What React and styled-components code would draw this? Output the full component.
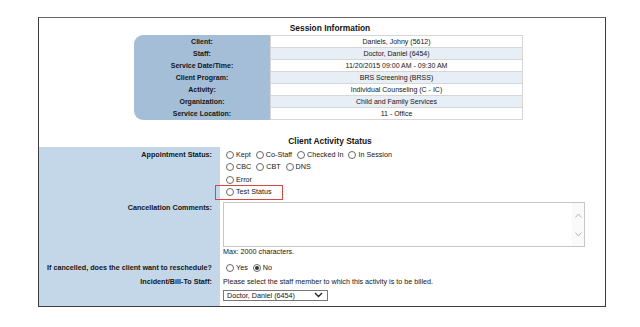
import React from "react";
import styled, { createGlobalStyle } from "styled-components";

const sessionRows = [
  ["Client:", "Daniels, Johny (5612)"],
  ["Staff:", "Doctor, Daniel (6454)"],
  ["Service Date/Time:", "11/20/2015 09:00 AM - 09:30 AM"],
  ["Client Program:", "BRS Screening (BRSS)"],
  ["Activity:", "Individual Counseling (C - IC)"],
  ["Organization:", "Child and Family Services"],
  ["Service Location:", "11 - Office"],
];

function Radio({ label, checked }) {
  return (
    <Option>
      <Circle $checked={checked} />
      {label}
    </Option>
  );
}

export default function App() {
  return (
    <>
      <Global />
      <Frame>
        <Title>Session Information</Title>
        <SessionTable>
          <LabelCol>
            {sessionRows.map(([l]) => (
              <LabelLine key={l}>{l}</LabelLine>
            ))}
          </LabelCol>
          <ValueCol>
            {sessionRows.map(([l, v], i) => (
              <ValueLine key={l} $alt={i % 2 === 1}>
                {v}
              </ValueLine>
            ))}
          </ValueCol>
        </SessionTable>

        <Title $lower>Client Activity Status</Title>
        <Form>
          <Label $pt={2}>Appointment Status:</Label>
          <Field $pt={2}>
            <Line>
              <Radio label="Kept" />
              <Radio label="Co-Staff" />
              <Radio label="Checked In" />
              <Radio label="In Session" />
            </Line>
            <Line>
              <Radio label="CBC" />
              <Radio label="CBT" />
              <Radio label="DNS" />
            </Line>
            <Line>
              <Radio label="Error" />
            </Line>
            <Line>
              <Highlight>
                <Radio label="Test Status" />
              </Highlight>
            </Line>
          </Field>

          <Label $pt={4}>Cancellation Comments:</Label>
          <Field $pt={4}>
            <CommentBox>
              <textarea />
              <Scroll>
                <svg width="7" height="5" viewBox="0 0 7 5">
                  <path d="M0.5 4.5 L3.5 1 L6.5 4.5" fill="none" stroke="#b5b5b5" strokeWidth="1" />
                </svg>
                <svg width="7" height="5" viewBox="0 0 7 5">
                  <path d="M0.5 0.5 L3.5 4 L6.5 0.5" fill="none" stroke="#b5b5b5" strokeWidth="1" />
                </svg>
              </Scroll>
            </CommentBox>
            <Note>Max: 2000 characters.</Note>
          </Field>

          <Label $pt={5}>If cancelled, does the client want to reschedule?</Label>
          <Field $pt={5}>
            <Line>
              <Radio label="Yes" />
              <Radio label="No" checked />
            </Line>
          </Field>

          <Label $pt={2}>Incident/Bill-To Staff:</Label>
          <Field $pt={2} $pb={5}>
            <Line>Please select the staff member to which this activity is to be billed.</Line>
            <Select>
              <span>Doctor, Daniel (6454)</span>
              <svg width="9" height="6" viewBox="0 0 9 6">
                <path d="M1 1 L4.5 4.5 L8 1" fill="none" stroke="#222" strokeWidth="1.4" />
              </svg>
            </Select>
          </Field>
        </Form>
      </Frame>
    </>
  );
}

const Global = createGlobalStyle`
  body {
    margin: 0;
    background: #fff;
    font-family: "Liberation Sans", Arial, sans-serif;
    color: #151515;
  }
`;

const Frame = styled.div`
  box-sizing: border-box;
  width: 568px;
  margin: 17px 0 0 38px;
  border: 1px solid #3c3c3c;
  border-top-color: #666;
`;

const Title = styled.div`
  font-size: 8.4px;
  font-weight: bold;
  text-align: center;
  padding-left: 16px;
  line-height: ${(p) => (p.$lower ? "12px" : "14px")};
  margin-top: ${(p) => (p.$lower ? "15px" : "3px")};
`;

const SessionTable = styled.div`
  display: grid;
  grid-template-columns: 136px 253px;
  margin-left: 95px;
  font-size: 7px;
`;

const LabelCol = styled.div`
  background: #a4bed7;
  border-radius: 9px 0 0 9px;
  padding-top: 1px;
`;

const LabelLine = styled.div`
  height: 12px;
  line-height: 12px;
  text-align: center;
  font-weight: bold;
`;

const ValueCol = styled.div`
  border: 1px solid #d6d6d6;
  border-bottom: none;
`;

const ValueLine = styled.div`
  height: 11px;
  line-height: 11px;
  text-align: center;
  border-bottom: 1px solid #d6d6d6;
  background: ${(p) => (p.$alt ? "#e7eef6" : "#fff")};
`;

const Form = styled.div`
  display: grid;
  grid-template-columns: 181px 1fr;
  font-size: 7.2px;
`;

const Label = styled.div`
  background: #c4d7e9;
  font-weight: bold;
  text-align: right;
  padding: ${(p) => p.$pt}px 8px 0 0;
  line-height: 12.3px;
`;

const Field = styled.div`
  padding: ${(p) => p.$pt}px 0 ${(p) => p.$pb || 0}px 3px;
`;

const Line = styled.div`
  display: flex;
  align-items: center;
  height: 12.3px;
  line-height: 12.3px;
`;

const Option = styled.span`
  display: inline-flex;
  align-items: center;
  margin: 0 2px 0 3px;
`;

const Circle = styled.span`
  box-sizing: border-box;
  width: 8px;
  height: 8px;
  margin-right: 2px;
  border-radius: 50%;
  border: 1px solid #6a6a6a;
  background: #fff;
  display: inline-flex;
  align-items: center;
  justify-content: center;
  &::after {
    content: "";
    width: 4px;
    height: 4px;
    border-radius: 50%;
    background: ${(p) => (p.$checked ? "#333" : "transparent")};
  }
`;

const Highlight = styled.span`
  position: relative;
  display: inline-flex;
  &::after {
    content: "";
    position: absolute;
    left: -8px;
    right: -9px;
    top: -1px;
    bottom: -2px;
    border: 1.5px solid #d8473f;
  }
`;

const CommentBox = styled.div`
  box-sizing: border-box;
  display: flex;
  width: 362px;
  height: 45px;
  border: 1px solid #c6c6c6;
  background: #fff;
  textarea {
    flex: 1;
    border: none;
    outline: none;
    resize: none;
    padding: 0;
    background: transparent;
  }
`;

const Scroll = styled.div`
  width: 12px;
  background: #fafafa;
  display: flex;
  flex-direction: column;
  justify-content: space-between;
  align-items: center;
  padding: 10px 0 9px;
`;

const Note = styled.div`
  line-height: 10px;
`;

const Select = styled.div`
  box-sizing: border-box;
  display: flex;
  align-items: center;
  justify-content: space-between;
  width: 105px;
  height: 11px;
  margin-top: 1px;
  padding: 0 4px 0 3px;
  border: 1px solid #777;
  background: #fff;
  line-height: 9px;
`;
